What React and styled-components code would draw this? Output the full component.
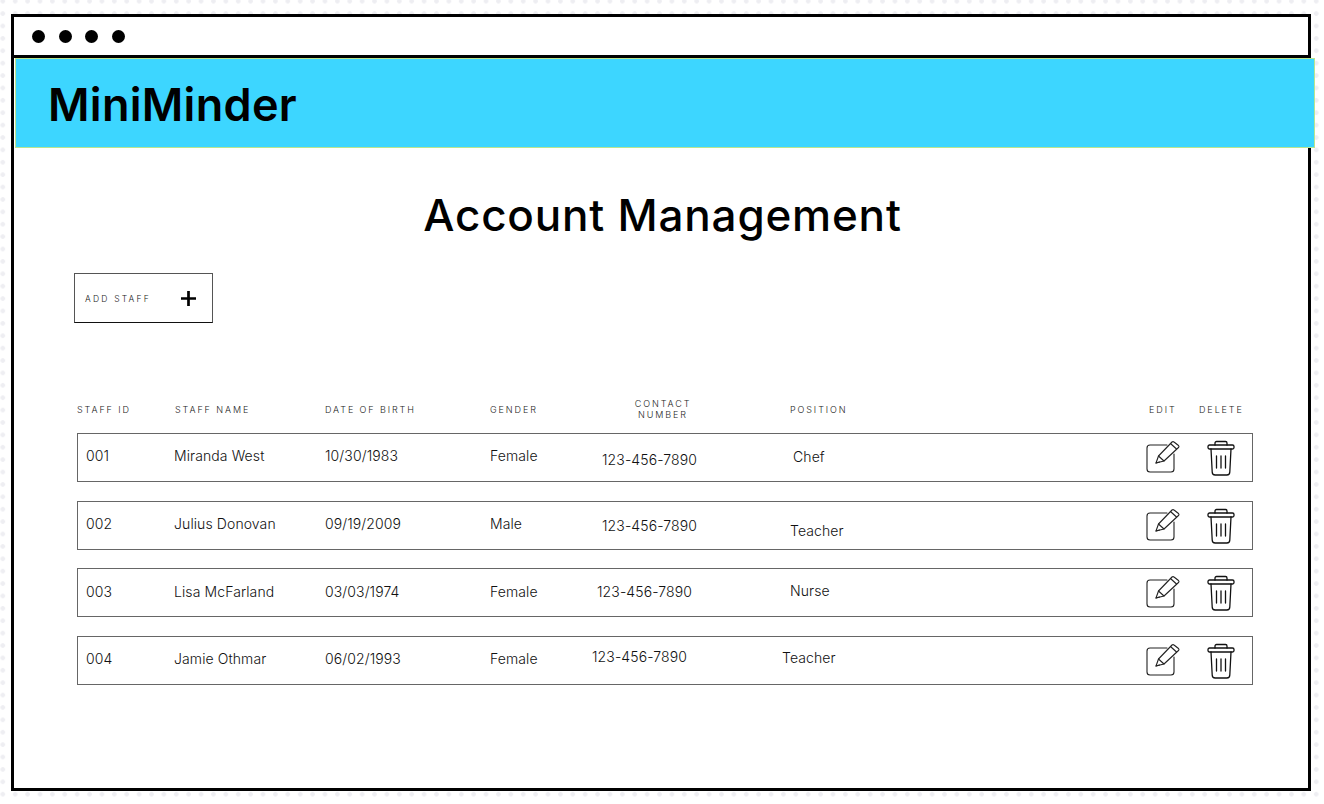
import React from 'react';
import styled, { createGlobalStyle } from 'styled-components';

const GlobalStyle = createGlobalStyle`
  html, body {
    margin: 0;
    padding: 0;
    height: 804px;
    overflow: hidden;
  }
  body {
    font-family: "Inter", "Liberation Sans", sans-serif;
    color: #000;
    background-color: #fff;
    background-image: radial-gradient(circle, #eeeef2 2px, transparent 2.5px);
    background-size: 12.4px 12.4px;
    background-position: 9px -5px;
  }
`;

const Page = styled.div`
  padding: 14px 0 0 11px;
`;

const Frame = styled.div`
  width: 1300px;
  height: 777px;
  box-sizing: border-box;
  border: 3px solid #000;
  background: #fff;
`;

const TitleBar = styled.div`
  height: 36.500px;
  box-sizing: content-box;
  display: flex;
  align-items: center;
  gap: 13.500px;
  padding: 1px 0 0 18px;
  margin-bottom: -0.500px;
  border-bottom: 3px solid #000;
`;

const Dot = styled.span`
  width: 13px;
  height: 13px;
  border-radius: 50%;
  background: #000;
`;

const Banner = styled.header`
  width: 1300px;
  height: 90px;
  margin: 1px 0 0 1px;
  box-sizing: border-box;
  border: 1px solid #b9e58f;
  background: #3dd6ff;
  display: flex;
  align-items: center;
  padding-left: 32px;
`;

const Brand = styled.h1`
  margin: 2px 0 0;
  font-size: 45px;
  font-weight: 600;
  letter-spacing: 0.300px;
  line-height: 1;
`;

const Content = styled.main`
  padding: 0 57px 0 60px;
`;

const Title = styled.h2`
  margin: 40px 0 0;
  font-size: 44px;
  font-weight: 500;
  letter-spacing: 0.800px;
  line-height: 54px;
  text-align: center;
`;

const AddButton = styled.button`
  display: flex;
  align-items: center;
  justify-content: space-between;
  box-sizing: border-box;
  width: 139px;
  height: 50px;
  margin: 31px 0 0 0;
  padding: 1px 16px 0 10px;
  background: #fff;
  border: 1px solid #555;
  border-bottom-color: #111;
  font-family: inherit;
  font-size: 8.500px;
  font-weight: 300;
  letter-spacing: 2.200px;
  color: #222;
`;

const HeaderRow = styled.div`
  display: flex;
  align-items: center;
  height: 30px;
  margin: 71px 0 9px 3px;
`;

const HeaderCell = styled.div`
  flex: none;
  width: ${p => p.$w}px;
  margin-left: ${p => p.$dx || 0}px;
  font-size: 9px;
  font-weight: 300;
  line-height: 11px;
  letter-spacing: 1.900px;
  color: #222;
  text-align: ${p => (p.$center ? 'center' : 'left')};
`;

const Rows = styled.div`
  display: flex;
  flex-direction: column;
  gap: 18.700px;
  margin-left: 3px;
`;

const Row = styled.div`
  display: flex;
  align-items: flex-start;
  box-sizing: border-box;
  width: 1176px;
  height: 49px;
  border: 1px solid #666;
  padding-left: 8px;
`;

const Cell = styled.div`
  flex: none;
  width: ${p => p.$w}px;
  margin-top: ${p => p.$dy}px;
  margin-left: ${p => p.$dx || 0}px;
  margin-right: ${p => -(p.$dx || 0)}px;
  font-size: 14px;
  font-weight: 300;
  letter-spacing: 0.100px;
  line-height: 20px;
  color: #111;
  white-space: nowrap;
`;

const Actions = styled.div`
  margin-left: auto;
  display: flex;
  align-items: flex-start;
  gap: 27px;
  padding: 6px 17px 0 0;
`;

const EditIcon = () => (
  <svg width="34" height="36" viewBox="0 0 34 36" fill="none" stroke="#222" strokeWidth="1.1" strokeLinejoin="round" strokeLinecap="round">
    <path d="M21 5H4a3 3 0 0 0-3 3v21a3 3 0 0 0 3 3h21a3 3 0 0 0 3-3V14" />
    <path d="M10 23l2.500-7L26 2a1.500 1.500 0 0 1 2 0l4.500 3.500a1.500 1.500 0 0 1 0 2L18 21z" />
    <path d="M12.500 16l5.500 5M24.500 3.500l6 5.500M10 23l3.500-1" />
  </svg>
);

const TrashIcon = () => (
  <svg width="28" height="36" viewBox="0 0 28 36" fill="none" stroke="#111" strokeWidth="1.300" strokeLinejoin="round" strokeLinecap="round">
    <path d="M8 5V3a1.500 1.500 0 0 1 1.500-1.500h9A1.500 1.500 0 0 1 20 3v2" />
    <rect x="1" y="5" width="26" height="4" rx="1.500" />
    <path d="M4 9l1.200 23a3 3 0 0 0 3 3h11.600a3 3 0 0 0 3-3L24 9" />
    <path d="M9.500 16v12M14 16v12M18.500 16v12" />
  </svg>
);

const PlusIcon = () => (
  <svg width="15" height="15" viewBox="0 0 15 15" stroke="#000" strokeWidth="2.700">
    <path d="M7.500 0v15M0 7.500h15" />
  </svg>
);

const staff = [
  { id: '001', name: 'Miranda West', dob: '10/30/1983', gender: 'Female', phone: '123-456-7890', pos: 'Chef', dy: 12, dyPhone: 16, dyPos: 13, dxPhone: 0, dxPos: 3 },
  { id: '002', name: 'Julius Donovan', dob: '09/19/2009', gender: 'Male', phone: '123-456-7890', pos: 'Teacher', dy: 12, dyPhone: 14, dyPos: 19, dxPhone: 0, dxPos: 0 },
  { id: '003', name: 'Lisa McFarland', dob: '03/03/1974', gender: 'Female', phone: '123-456-7890', pos: 'Nurse', dy: 13, dyPhone: 13, dyPos: 12, dxPhone: -5, dxPos: 0 },
  { id: '004', name: 'Jamie Othmar', dob: '06/02/1993', gender: 'Female', phone: '123-456-7890', pos: 'Teacher', dy: 12, dyPhone: 10, dyPos: 11, dxPhone: -10, dxPos: -8 },
];

export default function App() {
  return (
    <Page>
      <GlobalStyle />
      <Frame>
        <TitleBar>
          <Dot /><Dot /><Dot /><Dot />
        </TitleBar>
        <Banner>
          <Brand>MiniMinder</Brand>
        </Banner>
        <Content>
          <Title>Account Management</Title>
          <AddButton>
            ADD STAFF
            <PlusIcon />
          </AddButton>
          <HeaderRow>
            <HeaderCell $w={98}>STAFF ID</HeaderCell>
            <HeaderCell $w={150}>STAFF NAME</HeaderCell>
            <HeaderCell $w={165}>DATE OF BIRTH</HeaderCell>
            <HeaderCell $w={129}>GENDER</HeaderCell>
            <HeaderCell $w={88} $center>CONTACT NUMBER</HeaderCell>
            <HeaderCell $w={359} $dx={83}>POSITION</HeaderCell>
            <HeaderCell $w={50}>EDIT</HeaderCell>
            <HeaderCell $w={50}>DELETE</HeaderCell>
          </HeaderRow>
          <Rows>
            {staff.map(s => (
              <Row key={s.id}>
                <Cell $w={88} $dy={s.dy}>{s.id}</Cell>
                <Cell $w={151} $dy={s.dy}>{s.name}</Cell>
                <Cell $w={165} $dy={s.dy}>{s.dob}</Cell>
                <Cell $w={112} $dy={s.dy}>{s.gender}</Cell>
                <Cell $w={188} $dy={s.dyPhone} $dx={s.dxPhone}>{s.phone}</Cell>
                <Cell $w={100} $dy={s.dyPos} $dx={s.dxPos}>{s.pos}</Cell>
                <Actions>
                  <EditIcon />
                  <TrashIcon />
                </Actions>
              </Row>
            ))}
          </Rows>
        </Content>
      </Frame>
    </Page>
  );
}
